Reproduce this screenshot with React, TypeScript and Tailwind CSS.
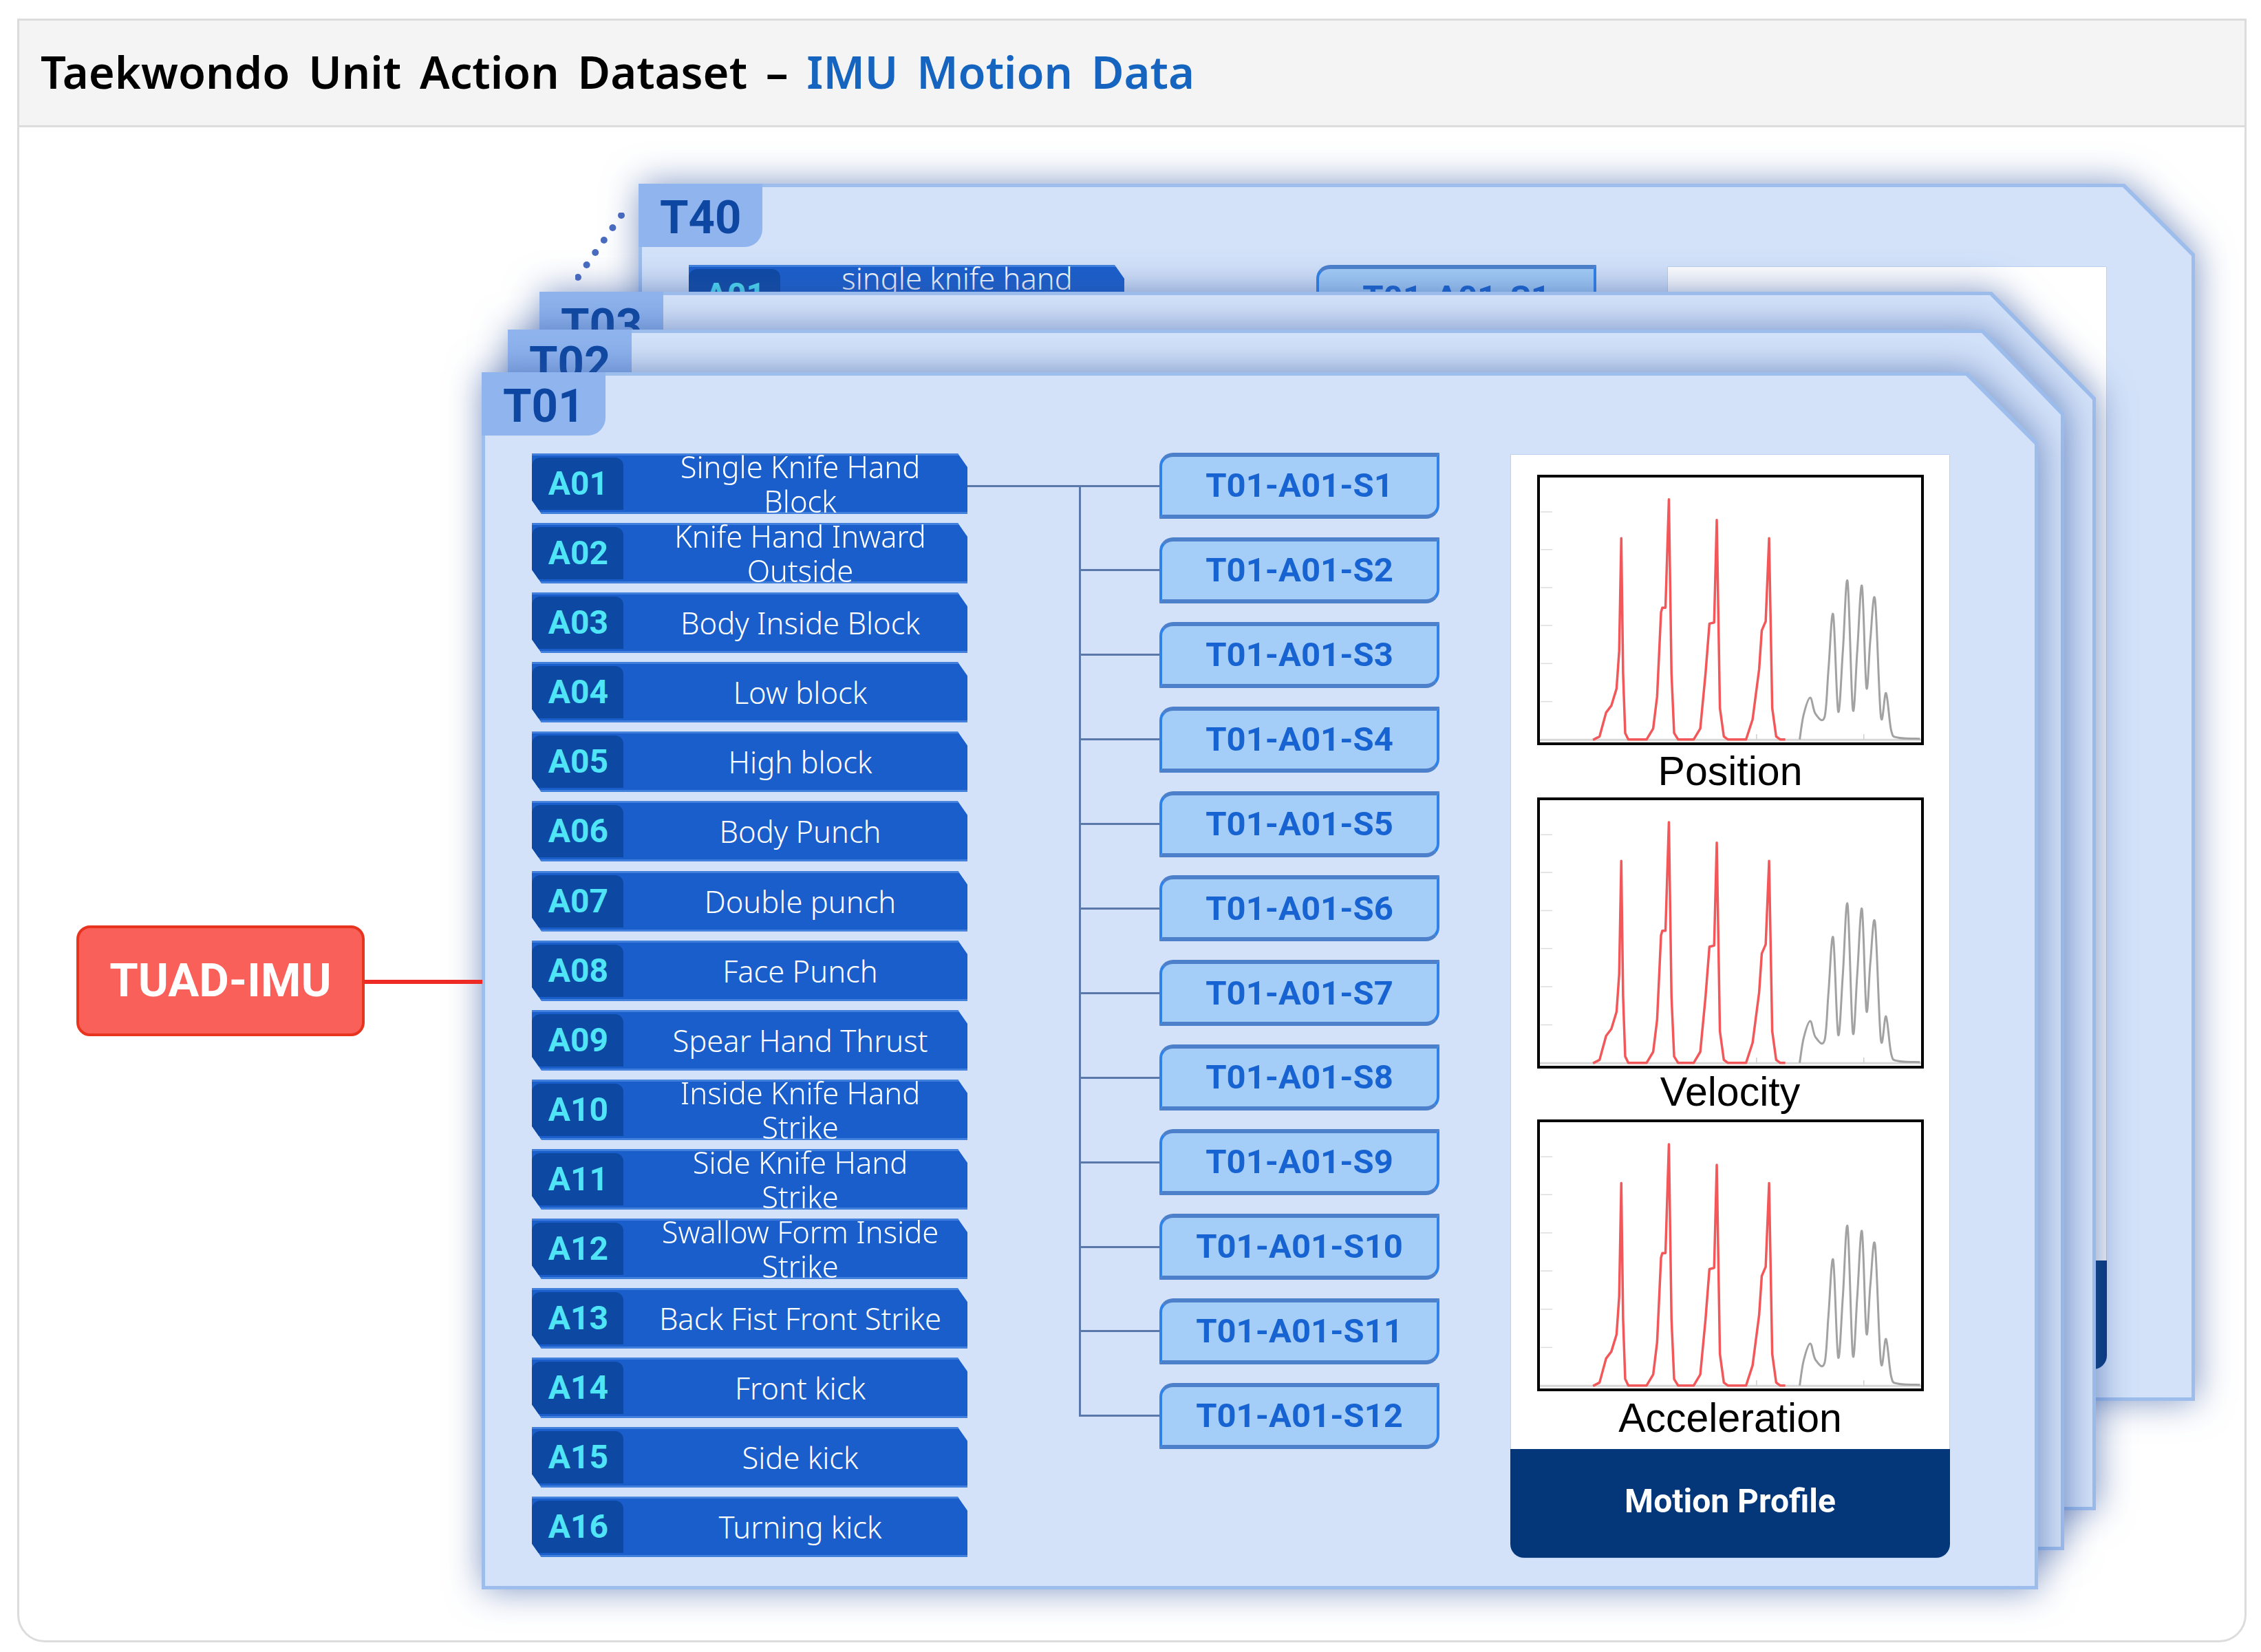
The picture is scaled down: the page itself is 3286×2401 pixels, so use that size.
const ACTIONS = [
  'Single Knife Hand Block',
  'Knife Hand Inward Outside',
  'Body Inside Block',
  'Low block',
  'High block',
  'Body Punch',
  'Double punch',
  'Face Punch',
  'Spear Hand Thrust',
  'Inside Knife Hand Strike',
  'Side Knife Hand Strike',
  'Swallow Form Inside Strike',
  'Back Fist Front Strike',
  'Front kick',
  'Side kick',
  'Turning kick',
];

const pad = (n: number) => String(n).padStart(2, '0');

// trace of the plots, in the plot's own units (see viewBox)
const RED =
  '245,1190 270,1175 295,1070 315,1040 335,965 345,800 353,305 360,900 368,1160 380,1188 450,1188 475,1140 490,1000 505,630 510,610 522,610 535,135 545,900 555,1160 570,1188 630,1188 655,1140 675,900 690,680 708,675 718,225 730,1050 745,1175 760,1188 830,1188 855,1100 880,880 890,710 905,670 918,305 930,1050 945,1175 960,1188 980,1188';
const GRAY: [number, number][] = [
  [1035, 1188], [1050, 1080], [1075, 1005], [1095, 1075], [1130, 1090], [1145, 880], [1163, 640], [1182, 1065],
  [1200, 800], [1218, 495], [1238, 1055], [1255, 800], [1273, 515], [1290, 960], [1305, 750], [1323, 575],
  [1345, 1085], [1365, 985], [1385, 1150], [1410, 1180], [1495, 1185],
];
const TICKS = [190, 355, 522, 688, 855, 1022];

// catmull-rom through the points, the grey trace is rounder than the red one
function smooth(pts: [number, number][]) {
  let d = `M${pts[0][0]},${pts[0][1]}`;
  for (let i = 0; i < pts.length - 1; i++) {
    const p0 = pts[Math.max(i - 1, 0)];
    const p1 = pts[i];
    const p2 = pts[i + 1];
    const p3 = pts[Math.min(i + 2, pts.length - 1)];
    d += ` C${p1[0] + (p2[0] - p0[0]) / 6},${p1[1] + (p2[1] - p0[1]) / 6} ${p2[0] - (p3[0] - p1[0]) / 6},${p2[1] - (p3[1] - p1[1]) / 6} ${p2[0]},${p2[1]}`;
  }
  return d;
}

function Plot({ className }: { className: string }) {
  return (
    <div className={`w-[562px] border-[4px] border-black bg-white ${className}`}>
      <svg className="block w-full h-full" viewBox="42 39 1457 1162" preserveAspectRatio="none">
        <polyline points="42,1190 1499,1190" fill="none" stroke="#d6d6d6" strokeWidth="3" vectorEffect="non-scaling-stroke" />
        {TICKS.map(y => (
          <line key={y} x1="45" x2="90" y1={y} y2={y} stroke="#dcdcdc" strokeWidth="1.5" vectorEffect="non-scaling-stroke" />
        ))}
        {[870, 1280].map(x => (
          <line key={x} x1={x} x2={x} y1="1165" y2="1190" stroke="#cfcfcf" strokeWidth="1.5" vectorEffect="non-scaling-stroke" />
        ))}
        <path d={smooth(GRAY)} fill="none" stroke="#a2a2a2" strokeWidth="3" vectorEffect="non-scaling-stroke" />
        <polyline points={RED} fill="none" stroke="#f2585a" strokeWidth="3.5" strokeLinejoin="round" vectorEffect="non-scaling-stroke" />
      </svg>
    </div>
  );
}

function ActionRow({ code, label }: { code: string; label: string }) {
  return (
    <div className="h-[88px] flex items-stretch bg-[#1a5ecb] border-y-[3px] border-[#4080dc] [clip-path:polygon(0_0,calc(100%_-_14px)_0,100%_20px,100%_100%,14px_100%,0_calc(100%_-_20px))]">
      <div className="w-[133px] my-[3px] pl-[2px] shrink-0 flex items-center justify-center bg-[#0d48a3] rounded-t-[12px] text-[#4fe4f6] text-[48px] font-bold font-['Roboto',sans-serif]">
        {code}
      </div>
      <div className="flex-1 pl-[14px] flex items-center justify-center">
        <p className="w-[425px] text-center text-white text-[43.5px] leading-[50px] font-light font-['Noto_Sans',sans-serif]">{label}</p>
      </div>
    </div>
  );
}

function SampleChip({ label }: { label: string }) {
  return (
    <div className="h-[96px] flex items-center">
      <div className="w-[117px] h-[3px] bg-[#5b78ab]" />
      <div className="flex-1 h-full flex items-center justify-center bg-[#a4cdf7] border-x-[4px] border-x-[#2f82e8] border-y-[6px] border-y-[#4c80cb] rounded-tl-[20px] rounded-br-[20px] text-[#1763d1] text-[49px] font-bold font-['Roboto',sans-serif]">
        {label}
      </div>
    </div>
  );
}

function PlotLabel({ className, children }: { className: string; children: string }) {
  return <div className={`flex items-center justify-center text-black text-[59px] font-['Liberation_Sans',sans-serif] ${className}`}>{children}</div>;
}

function PanelBody() {
  return (
    <div className="flex pl-[68px] pt-[113px]">
      <div className="w-[633px] shrink-0 flex flex-col gap-[13.1px]">
        {ACTIONS.map((a, i) => (
          <ActionRow key={a} code={`A${pad(i + 1)}`} label={a} />
        ))}
      </div>

      <div className="relative w-[524px] ml-[162px] -mt-[1px] shrink-0 flex flex-col gap-[26.9px]">
        <div className="absolute -left-[162px] top-[47px] w-[162px] h-[3px] bg-[#5b78ab]" />
        <div className="absolute left-0 top-[47px] w-[3px] h-[1354px] bg-[#5b78ab]" />
        {Array.from({ length: 12 }, (_, i) => (
          <SampleChip key={i} label={`T01-A01-S${i + 1}`} />
        ))}
      </div>

      <div className="w-[639px] h-[1605px] mt-[1px] ml-[103px] shrink-0 flex flex-col items-center bg-white border border-[#bcd1f1] rounded-b-[20px]">
        <div className="flex-1 w-full pt-[29px] flex flex-col items-center">
          <Plot className="h-[393px]" />
          <PlotLabel className="h-[76px]">Position</PlotLabel>
          <Plot className="h-[394px]" />
          <PlotLabel className="h-[74px] pb-[6px]">Velocity</PlotLabel>
          <Plot className="h-[395px]" />
          <PlotLabel className="h-[83px] pb-[4px]">Acceleration</PlotLabel>
        </div>
        <div className="w-[639px] -mx-px h-[158px] pb-[6px] shrink-0 flex items-center justify-center bg-[#04367a] rounded-b-[20px] text-white text-[48px] font-bold font-['Roboto',sans-serif]">
          Motion Profile
        </div>
      </div>
    </div>
  );
}

// the back sheet: only its top edge and the end of the bar stick out from behind the others
function BackPanelBody() {
  return (
    <div className="flex pl-[68px] pt-[113px]">
      <div className="w-[633px] shrink-0">
        <ActionRow code="A01" label="single knife hand block" />
      </div>
      <div className="w-[524px] ml-[162px] shrink-0">
        <SampleChip label="T01-A01-S1" />
      </div>
      <div className="w-[639px] h-[1604px] mt-[2px] ml-[103px] shrink-0 flex flex-col bg-white border border-[#bcd1f1] rounded-b-[20px]">
        <div className="flex-1" />
        <div className="w-[639px] -mx-px h-[158px] shrink-0 bg-[#04367a] rounded-b-[20px]" />
      </div>
    </div>
  );
}

function Sheet({ className, outerCut, innerCut, tab, children }: { className: string; outerCut: string; innerCut: string; tab: string; children?: React.ReactNode }) {
  return (
    <div className={`absolute w-[2262px] [filter:drop-shadow(2px_0_26px_rgba(50,85,160,0.62))] ${className}`}>
      <div className={`absolute inset-0 bg-[#9dbdec] ${outerCut}`} />
      <div className={`absolute inset-[5px] overflow-hidden bg-[#d3e2f9] ${innerCut}`}>
        {children}
      </div>
      <div className="absolute left-0 top-0 w-[180px] h-[92px] pl-[31px] pt-[6px] flex items-center bg-[#8fb4ee] rounded-br-[26px] text-[#0d47a1] text-[67px] font-bold font-['Roboto',sans-serif]">
        {tab}
      </div>
    </div>
  );
}

export default function App() {
  return (
    <div className="w-[3286px] h-[2401px] bg-white pt-[27px] pl-[25px]">
      <div className="w-[3240px] h-[2360px] flex flex-col border-[3px] border-t-[3px] border-[#dcdcdc] rounded-b-[40px] overflow-hidden">
        <div className="h-[155px] shrink-0 pl-[31px] pb-[2px] flex items-center bg-[#f4f4f4] border-b-[3px] border-[#dcdcdc]">
          <h1 className="text-[65px] font-semibold text-black [word-spacing:10px] font-['Noto_Sans',sans-serif]">
            Taekwondo Unit Action Dataset – <span className="text-[#1565c0]">IMU Motion Data</span>
          </h1>
        </div>

        {/* offsets below are measured from this box, which starts at 28,187 on the page */}
        <div className="relative flex-1 mt-[2px]">
          <svg className="absolute left-[808px] top-[122px] w-[80px] h-[100px]" viewBox="0 0 80 100">
            {[0, 1, 2, 3, 4, 5].map(i => (
              <circle key={i} cx={67 - i * 12.6} cy={4 + i * 18} r="5" fill="#4a6cc0" />
            ))}
          </svg>

          <Sheet
            className="left-[900px] top-[80px] h-[1769px]"
            outerCut="[clip-path:polygon(0_0,calc(100%_-_102px)_0,100%_102px,100%_100%,0_100%)]"
            innerCut="[clip-path:polygon(0_0,calc(100%_-_100px)_0,100%_100px,100%_100%,0_100%)]"
            tab="T40"
          >
            <BackPanelBody />
          </Sheet>
          <Sheet
            className="left-[756px] top-[237px] h-[1771px]"
            outerCut="[clip-path:polygon(0_0,calc(100%_-_151px)_0,100%_154px,100%_100%,0_100%)]"
            innerCut="[clip-path:polygon(0_0,calc(100%_-_149px)_0,100%_152px,100%_100%,0_100%)]"
            tab="T03"
          />
          <Sheet
            className="left-[710px] top-[292px] h-[1774px]"
            outerCut="[clip-path:polygon(0_0,calc(100%_-_117px)_0,100%_121px,100%_100%,0_100%)]"
            innerCut="[clip-path:polygon(0_0,calc(100%_-_115px)_0,100%_119px,100%_100%,0_100%)]"
            tab="T02"
          />
          <Sheet
            className="left-[672px] top-[354px] h-[1769px]"
            outerCut="[clip-path:polygon(0_0,calc(100%_-_102px)_0,100%_102px,100%_100%,0_100%)]"
            innerCut="[clip-path:polygon(0_0,calc(100%_-_100px)_0,100%_100px,100%_100%,0_100%)]"
            tab="T01"
          >
            <PanelBody />
          </Sheet>

          <div className="absolute left-[500px] top-[1237px] w-[173px] h-[6px] bg-[#ee2a24]" />
          <div className="absolute left-[83px] top-[1158px] w-[419px] h-[161px] flex items-center justify-center bg-[#f9605a] border-[4px] border-[#e8341f] rounded-[20px] text-white text-[67px] font-bold font-['Roboto',sans-serif]">
            TUAD-IMU
          </div>
        </div>
      </div>
    </div>
  );
}
